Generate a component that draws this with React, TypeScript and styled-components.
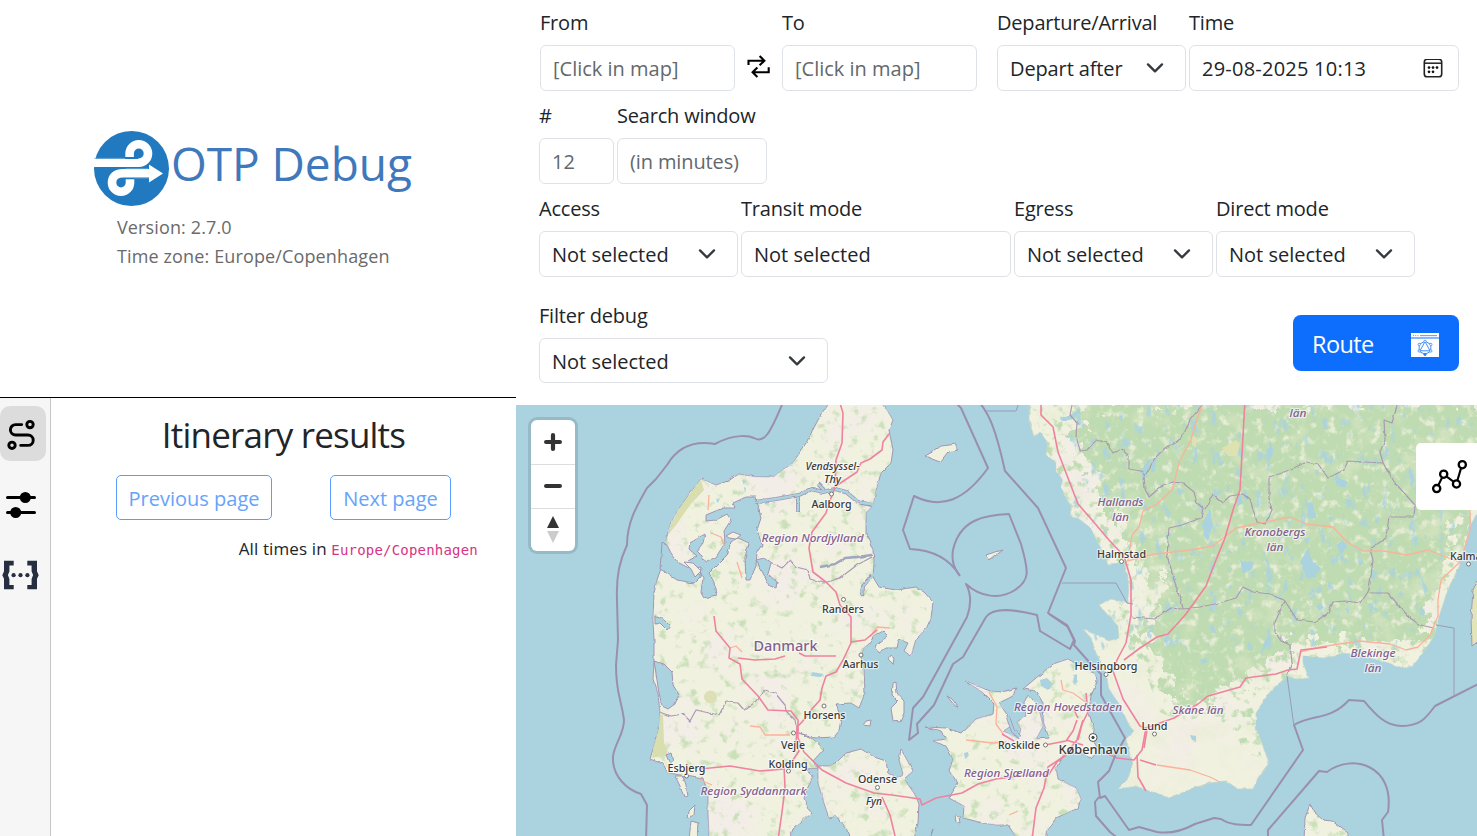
import React from 'react';
import styled, { createGlobalStyle } from 'styled-components';

const GlobalStyle = createGlobalStyle`
  * { box-sizing: border-box; }
  body {
    margin: 0;
    background: #fff;
    color: #212529;
    font-family: "Open Sans", "Noto Sans", sans-serif;
    font-size: 20px;
    line-height: 30px;
    letter-spacing: -0.2px;
  }
`;

const Page = styled.div`
  display: grid;
  grid-template-columns: 516px 1fr;
  width: 1477px;
  height: 836px;
  overflow: hidden;
`;

const Column = styled.div`
  display: flex;
  flex-direction: column;
  min-width: 0;
  height: 836px;
`;

const Brand = styled.header`
  height: 398px;
  flex: none;
  border-bottom: 1px solid #000;
  padding: 131px 0 0 94px;
`;

const BrandRow = styled.div`
  display: flex;
  align-items: flex-start;
  gap: 2px;
  height: 75px;
`;

const BrandTitle = styled.h1`
  margin: 0;
  padding-top: 3px;
  font-size: 46px;
  line-height: 58px;
  font-weight: 400;
  letter-spacing: -0.05px;
  color: #4078bc;
  white-space: nowrap;
`;

const BrandMeta = styled.div`
  padding: 7px 0 0 23px;
  font-size: 18px;
  line-height: 29px;
  letter-spacing: 0.13px;
  color: #6a6a6a;
`;

const Lower = styled.div`
  display: flex;
  flex: 1;
`;

const Sidebar = styled.nav`
  width: 51px;
  flex: none;
  border-right: 1px solid #c6c6c6;
  background: #f6f6f6;
  padding-top: 8px;
  display: flex;
  flex-direction: column;
  gap: 15px;
`;

const SideTab = styled.button<{ $active?: boolean }>`
  width: 46px;
  height: 55px;
  padding: 0;
  border: 0;
  border-radius: 10px;
  background: ${(p) => (p.$active ? '#dcdcdc' : 'transparent')};
  display: flex;
`;

const Results = styled.section`
  flex: 1;
  display: flex;
  flex-direction: column;
  align-items: center;
  padding-top: 14px;
`;

const ResultsTitle = styled.h2`
  margin: 0;
  font-size: 35px;
  line-height: 46px;
  font-weight: 400;
  letter-spacing: -0.8px;
`;

const Pager = styled.div`
  display: flex;
  gap: 58px;
  margin-top: 17px;
`;

const PageButton = styled.button<{ $width: number }>`
  width: ${(p) => p.$width}px;
  height: 45px;
  padding: 2px 0 0;
  border: 1px solid #5a9cfb;
  border-radius: 5px;
  background: #fff;
  color: #66a3fb;
  font: inherit;
  letter-spacing: 0;
  white-space: nowrap;
`;

const TimesNote = styled.div`
  align-self: flex-end;
  margin: 15px 38px 0 0;
  font-size: 17px;
  line-height: 28px;
  letter-spacing: 0.12px;
  white-space: nowrap;

  code {
    font-family: "DejaVu Sans Mono", monospace;
    font-size: 14px;
    letter-spacing: 0.2px;
    color: #d63384;
  }
`;

const SearchForm = styled.form`
  height: 405px;
  flex: none;
  padding: 8px 18px 0 23px;
`;

const FormRow = styled.div<{ $top?: number }>`
  display: flex;
  align-items: flex-start;
  gap: 3px;
  height: 83px;
  margin-top: ${(p) => p.$top ?? 10}px;
`;

const FieldBox = styled.label<{ $width: number; $left?: number }>`
  display: flex;
  flex-direction: column;
  gap: 7px;
  width: ${(p) => p.$width}px;
  margin-left: ${(p) => p.$left ?? 0}px;
  white-space: nowrap;
`;

const Control = styled.span<{ $muted?: boolean; $right: number; $height: number }>`
  display: flex;
  align-items: center;
  justify-content: space-between;
  height: ${(p) => p.$height}px;
  padding: ${(p) => 47 - p.$height}px ${(p) => p.$right}px 0 12px;
  border: 1px solid #dee2e6;
  border-radius: 6px;
  color: ${(p) => (p.$muted ? '#63686d' : '#212529')};
`;

const ControlText = styled.span<{ $spacing: number }>`
  letter-spacing: ${(p) => p.$spacing}px;
`;

const SwapButton = styled.button`
  align-self: flex-start;
  margin: 47px 9px 0 9px;
  padding: 0;
  width: 23px;
  height: 23px;
  border: 0;
  background: none;
  display: flex;
`;

const RouteButton = styled.button`
  width: 166px;
  height: 56px;
  margin: 14px 0 0 auto;
  padding: 3px 20px 0 19px;
  border: 0;
  border-radius: 8px;
  background: #0d6efd;
  color: #fff;
  font: inherit;
  font-size: 23.5px;
  letter-spacing: -0.6px;
  display: flex;
  align-items: center;
  justify-content: space-between;
`;

const RouteText = styled.span`
  padding-bottom: 2px;
`;

const MapArea = styled.main`
  position: relative;
  flex: 1;
  overflow: hidden;
  background: #aad3df;

  > svg { display: block; }
`;

const ZoomGroup = styled.div`
  position: absolute;
  left: 15px;
  top: 15px;
  width: 44px;
  border-radius: 6px;
  background: #fff;
  box-shadow: 0 0 0 3px rgba(0, 0, 0, 0.11);
`;

const ZoomButton = styled.button`
  display: flex;
  align-items: center;
  justify-content: center;
  width: 44px;
  height: 44px;
  padding: 0;
  border: 0;
  background: none;

  & + & {
    height: 43.5px;
    border-top: 1px solid #ddd;
  }
`;

const LayerToggle = styled.button`
  position: absolute;
  right: 0;
  top: 38px;
  width: 61px;
  height: 67px;
  padding: 0;
  border: 0;
  border-radius: 5px 0 0 5px;
  background: #fff;
  display: flex;
`;

const Chevron = () => (
  <svg width="18" height="12" viewBox="0 0.8 18 12" fill="none" stroke="#343a40" strokeWidth="2.3" strokeLinecap="round" strokeLinejoin="round">
    <path d="M2 2.2l7 7 7-7" />
  </svg>
);

const CalendarIcon = () => (
  <svg width="20" height="20" viewBox="0 0 20 20">
    <rect x="1.3" y="0.3" width="17.4" height="17.4" rx="2.8" fill="none" stroke="#222" strokeWidth="1.6" />
    <path d="M1 4.2h18" stroke="#222" strokeWidth="1.5" />
    <g fill="#111">
      {[[6, 8.6], [10, 8.6], [14, 8.6], [6, 12.8], [10, 12.8]].map(([x, y]) => (
        <circle key={`${x}-${y}`} cx={x} cy={y} r="1.35" />
      ))}
    </g>
  </svg>
);

type FieldProps = {
  label: string;
  value: string;
  width: number;
  left?: number;
  muted?: boolean;
  icon?: 'chevron' | 'calendar';
  right?: number;
  spacing?: number;
  height?: number;
};

const Field = ({ label, value, width, left, muted, icon, right = 21, spacing = 0, height = 46 }: FieldProps) => (
  <FieldBox $width={width} $left={left}>
    <span>{label}</span>
    <Control $muted={muted} $right={right} $height={height}>
      <ControlText $spacing={spacing}>{value}</ControlText>
      {icon === 'chevron' && <Chevron />}
      {icon === 'calendar' && <CalendarIcon />}
    </Control>
  </FieldBox>
);

const Logo = () => (
  <svg width="75" height="75" viewBox="0 0 75 75">
    <circle cx="37.5" cy="37.5" r="37.5" fill="#2179bf" />
    <g fill="none" stroke="#fff">
      <path strokeWidth="7.8" d="M0 32H45" />
      <path strokeWidth="8.6" d="M44 31.7h.8a9.2 9.2 0 1 0-9.2-9.2v3.6" />
      <path strokeWidth="8.6" d="M56 42.3H29C21 42.3 18 46.5 18 51.7a9 9 0 0 0 18 0v-3.5" />
    </g>
    <path d="M55 33.4l14 9-14 9.2z" fill="#fff" />
    <path d="M0 27.4h31M31.5 37.8H54M40.5 46.9H55" stroke="#8dbbe0" strokeWidth=".7" />
  </svg>
);

const ItineraryIcon = () => (
  <svg width="46" height="55" viewBox="0 406 46 55" fill="none" stroke="#000" strokeWidth="2.9" strokeLinecap="round">
    <circle cx="30" cy="424.6" r="3.2" />
    <circle cx="12" cy="445.3" r="3.2" />
    <path d="M21.7 424.6H15.6a5.2 5.2 0 0 0 0 10.4H28a5.2 5.2 0 0 1 0 10.4H20.7" />
  </svg>
);

const SlidersIcon = () => (
  <svg width="46" height="55" viewBox="0 476 46 55" stroke="#000" strokeWidth="3" strokeLinecap="round">
    <path d="M7.5 497.5h27M7.5 512.5h27" />
    <circle cx="25.3" cy="497.5" r="4" />
    <circle cx="15.7" cy="512.5" r="4" />
  </svg>
);

const BracesIcon = () => (
  <svg width="46" height="55" viewBox="0 546 46 55" fill="#262f3f">
    <path d="M13.7 560.8H4v10.4l-1.7 4 1.7 3.6v10.5h9.7V585H9.4v-6l-1.5-3.9 1.5-3.6v-6h4.3zM27.3 560.8H37v10.4l1.7 4-1.7 3.6v10.5h-9.7V585h4.3v-6l1.5-3.9-1.5-3.6v-6h-4.3z" />
    <circle cx="13.6" cy="575.2" r="2.1" />
    <circle cx="20.5" cy="575.2" r="2.1" />
    <circle cx="27.4" cy="575.2" r="2.1" />
  </svg>
);

const SwapIcon = () => (
  <svg width="23" height="23" viewBox="0 0 23 23" fill="none" stroke="#000" strokeWidth="2.1">
    <path d="M1.5 10V5.7h16M12.6 1l4.8 4.7-4.8 4.6M21.7 12.3v5h-16M10.4 12.5l-4.8 4.8 4.8 4.6" />
  </svg>
);

const GraphWindowIcon = () => (
  <svg width="28" height="24" viewBox="0 0 28 24" fill="none">
    <rect width="28" height="24" fill="#fff" />
    <path d="M0 5h28" stroke="#0d6efd" strokeWidth="1" />
    <path d="M2 2.6h6" stroke="#0d6efd" strokeWidth="1" strokeDasharray="1 1.2" opacity=".7" />
    <path d="M9 2.6h17" stroke="#0d6efd" strokeWidth="1.1" opacity=".65" />
    <g stroke="#2a7dfc" strokeWidth=".9">
      <path d="M14 8.2l-5.8 3.2v6.8l5.8 3.3 5.8-3.3v-6.8zM14 8.5l-5 9.3h10z" />
    </g>
    <g stroke="#2a7dfc" strokeWidth=".7" fill="#fff">
      <circle cx="14" cy="8.4" r="1.2" />
      <circle cx="8.2" cy="11.4" r="1.2" />
      <circle cx="19.8" cy="11.4" r="1.2" />
      <circle cx="8.2" cy="18" r="1.2" />
      <circle cx="19.8" cy="18" r="1.2" />
      <circle cx="14" cy="21.4" r="1.2" fill="#2a7dfc" />
    </g>
  </svg>
);

const NodesIcon = () => (
  <svg width="61" height="67" viewBox="1416 443 61 67" stroke="#000" strokeWidth="2.3" fill="#fff">
    <path d="M1436.7 488.5l7-14.2 12.7 9.5 5.7-19.2" strokeWidth="2.1" fill="none" />
    <circle cx="1436.7" cy="488.6" r="3.6" />
    <circle cx="1443.7" cy="474.2" r="3.6" />
    <circle cx="1456.5" cy="484" r="3.6" />
    <circle cx="1462.3" cy="464.7" r="3.6" />
  </svg>
);

/* Outlines of the land masses, in map canvas units. */
const JUTLAND =
  'M701 479L716 485 728 481 739 474 756 477 773 477 793 463 806 443 818 420 828 405V400H882L884 405 893 420 889 430 893 450 891 463 881 473 876 490 873 505 866 513 866 533 873 550 874 563 873 577 879 587 896 590 916 587 924 592 933 602 931 618 926 629 916 639 911 656 904 651 908 643 898 639 896 648 886 648 879 653 875 646 888 636 883 631 874 636 869 644 863 649 861 658 864 668 865 693 859 708 851 703 836 704 841 719 839 731 834 737 816 738 799 733 813 739 824 749 813 761 818 768 806 769 813 776 808 786 804 799 811 813 793 829 789 840H709L709 833 708 813 708 793 703 779 686 776 675 774 668 773 663 764 650 759 654 746 659 729 660 713 658 693 653 679 654 663 654 640 653 620 654 592 657 580 664 560 666 541 670 525 678 510 690 493Z';
const FUNEN =
  'M818 766L829 766 836 763 846 753 861 749 874 757 886 761 888 773 896 778 903 774 899 760 901 749 907 760 913 771 904 779 914 793 919 803 918 823 914 840H850L849 833 836 816 829 818 824 803 818 783Z';
const ZEALAND =
  'M925 727L946 728 961 733 976 719 993 714 994 703 985 694 966 681 989 691 1003 692 1016 688 1013 696 999 703 1006 713 1011 726 1003 731 1019 739 1021 729 1017 722 1026 716 1024 703 1028 694 1038 706 1043 726 1036 739 1049 738 1044 723 1043 703 1036 691 1023 689 1036 678 1053 664 1068 659 1083 668 1096 674 1097 682 1091 696 1089 713 1094 729 1093 739 1098 750 1091 758 1080 752 1063 756 1056 768 1058 779 1076 788 1081 799 1078 808 1056 818 1046 833 1046 840H1018L1008 825 997 825 983 823 963 818 964 806 949 798 958 783 949 771 953 759 946 746 933 741 946 739 941 731Z';
const SWEDEN =
  'M1029 400L1029 420 1034 437 1040 432 1048 443 1046 455 1056 462 1056 470 1063 480 1061 487 1071 507 1072 517 1078 518 1091 528 1098 543 1104 553 1108 564 1124 563 1128 577 1129 590 1128 603 1111 599 1099 605 1106 613 1111 618 1118 626 1119 638 1109 641 1083 629 1091 638 1096 653 1106 673 1109 689 1119 703 1128 723 1134 731 1126 739 1129 751 1133 763 1128 779 1118 789 1136 786 1149 791 1156 793 1169 798 1194 788 1209 783 1226 781 1238 789 1253 789 1259 776 1269 763 1263 746 1256 729 1256 713 1266 696 1279 683 1289 676 1296 679 1309 678 1303 663 1303 656 1323 658 1343 653 1365 656 1389 663 1403 668 1413 666 1423 653 1434 636 1439 616 1449 587 1459 567 1466 543 1470 525 1480 510V400Z';
const FOREST =
  'M1072 400L1078 430 1086 460 1100 485 1114 515 1130 540 1142 562 1162 590 1158 612 1132 628 1138 640 1158 652 1165 685 1182 703 1212 700 1240 680 1262 660 1290 645 1320 642 1415 638 1427 618 1438 585 1454 545 1480 490V400Z';
const BORNHOLM = 'M1310 804L1315 813 1323 820 1332 821 1348 833 1348 840H1304L1305 818Z';
const OLAND = 'M1480 575L1473 590 1471 618 1472 646 1480 640Z';

const ISLANDS = [
  'M925 456L934 451 941 446 957 444 957 450 948 452 940 462 932 459Z',
  'M893 684L896 683 897 693 904 701 904 713 900 722 893 721 891 708 898 701 892 695Z',
  'M890 655L894 658 893 664 888 659Z',
  'M947 696L952 699 958 707 955 706Z',
  'M675 776L683 776 686 785 688 796 684 797 680 786Z',
  'M689 811L695 805 694 815 688 818Z',
  'M691 821L698 823 697 840H689Z',
  'M866 721L871 720 870 726 863 725Z',
  'M930 836L933 829 930 840Z',
  'M986 555L992 553 1003 550 995 556 990 560Z',
  'M955 815L959 816 960 824 956 822Z',
];

const FJORDS = [
  'M662 543L667 545 671 553 679 563 693 570 703 577 701 593 704 598 716 595 714 582 709 573 719 563 727 555 731 543 738 538 749 543 745 557 746 580 750 580 756 566 757 552 762 545 757 530 761 518 756 497 746 497 733 503 735 508 723 508 706 515 706 521 716 520 727 514 731 520 724 531 725 543 716 557 706 562 702 556 697 551 703 543 705 534 690 543 689 549 697 556 688 561 694 568 701 567 700 577 694 583 677 580 665 572 660 569Z',
  'M756 560L764 558 771 563 768 574 777 582 776 588 769 586 764 575Z',
  'M654 661L664 664 672 672 673 685 679 695 675 704 668 709 662 706 659 693Z',
  'M655 616L664 620 670 626 667 630 660 623 655 624Z',
  'M666 755L671 753 674 761 670 764Z',
];

const LAKES = [
  'M1040 680l7-2 6 6-5 6-7-4z', 'M1073 675l4-1v9l-3 3z', 'M964 753l4-1 1 5-4 2z',
  'M1203 520l7-10 3 15-5 15-5-5z', 'M1141 470l8-12 2 3-7 18z', 'M1153 458l4 0-3 15-3-2z',
  'M1300 562l8-14 5 14 8 6-5 9-9 2z', 'M1306 502l7 2 3 14-7 0z', 'M1343 540l5 8-7 5-6-7z',
  'M1266 450l5-7 2 10-4 9z', 'M1240 560l5 2 9 0-3 8-8 3z', 'M1336 473l5 6 7 3-3 6-9-3z',
  'M1316 606l5-3 3 5-4 4z', 'M1265 640l5-6-3 12-6 8z', 'M1200 660l6-2 2 4-6 2z', 'M1190 735l6 1 0 5-4-1z',
  'M1060 418l14-5 5-7 2 8-12 6-7 2z', 'M1270 700l6 3 0 5z', 'M1245 488l3 12-5-1z', 'M1237 490l6 12-6 5z',
  'M716 500l4-2-2 5zM742 480l3 1-1 4zM744 487l2 1-1 6z', 'M812 672l12 2-3 3-10-1z',
];

const TERRITORIAL_LINES = [
  'M646 840L647 805 641 794C628 790 612 777 613 757C614 744 624 735 624 720C621 697 616 695 616 665L618 640 617 600C616 575 620 560 627 545C627 523 636 507 647 488L656 479 667 465C677 448 692 440 715 444C735 433 750 436 754 438C764 444 770 434 784 400',
  'M957 404L961 408 988 468C965 500 942 510 914 496L903 530 910 549C932 550 950 559 960 576',
  'M977 400C989 412 996 430 1005 471L1038 508 1066 568 1048 613 1067 625 1074 640 1070 649 1040 631 1037 615C1010 608 992 609 986 617L963 657 953 664 934 705 917 724 918 733 909 740 913 708 923 697 967 617C971 606 972 595 966 584C980 597 1000 600 1015 590C1030 580 1029 572 1021 544L1009 514C985 515 960 519 953 550C951 562 955 569 959 575',
  'M1049 614L1068 627 1075 641 1074 645 1090 663 1101 674 1101 695 1125 738 1115 756 1109 771 1098 782 1100 798 1105 796 1129 830 1139 827 1157 832C1170 834 1184 830 1195 824L1214 818 1221 819C1230 825 1240 825 1251 825L1303 750 1294 725C1312 714 1330 721 1349 700L1364 701C1375 714 1385 726 1402 726C1422 726 1427 716 1435 706L1480 683',
  'M1268 840V830L1319 771 1327 772C1352 753 1395 765 1388 812L1382 820 1384 840',
  'M1099 797L1095 802 1096 816 1110 832 1120 840',
];

const THIN_LINES = [
  'M984 411H1016L1020 400',
  'M1062 583H1116L1127 603 1133 604',
  'M1287 676L1294 726',
  'M1436 625L1454 628V696',
];

const ADMIN_BORDERS = [
  'M1072 405L1070 415 1077 423 1076 436 1080 451 1087 450 1096 440 1107 443 1113 453 1121 449 1129 456 1129 469 1141 471 1145 476 1155 458 1165 448 1182 438 1190 420 1202 405',
  'M1144 476L1145 489 1149 497 1163 485 1173 482 1183 483 1194 492 1197 503 1203 508 1201 518 1182 525 1169 528 1167 556 1174 580 1181 600 1183 609 1200 607 1215 604 1236 598 1243 587 1253 592 1270 594 1285 601 1297 620 1315 622 1328 613 1333 602 1345 601 1361 603 1369 590 1373 560 1370 549 1386 538 1389 517 1414 517 1415 505 1395 483 1383 463 1348 461 1344 470 1328 478 1318 464 1307 462 1282 473 1269 477 1269 498 1272 510 1265 524 1257 522 1250 500 1243 494 1230 496 1222 503 1213 495 1205 510',
  'M1383 463L1380 452 1385 440 1384 420 1392 423 1397 405',
  'M1132 617L1155 619 1171 608 1182 609M1285 601L1275 622 1275 632 1281 641 1290 645 1292 662 1287 676',
  'M1369 593L1388 593 1400 607 1410 618 1420 625 1434 628',
  'M660 712L670 716 683 714 690 721 696 710 709 713 719 715 726 702 738 703 744 710 757 701 765 690 775 693 785 705 786 711 795 720 798 735',
  'M770 562L782 568 790 560 796 567 808 570 810 579 824 583 840 578 857 565 872 557',
];

const MOTORWAYS = [
  'M839 400L843 413 842 443 836 460 835 487 828 506 826 513 812 532 809 548 813 572 826 582 836 592 840 605 851 617 851 643 843 660 836 672 826 676 822 688 820 700 812 709 802 722 797 727 796 745 799 751 791 763 784 765 785 788 782 812 778 840',
  'M889 434L883 442 882 450 870 459 861 463 857 472 845 480 836 486',
  'M851 642L865 640 877 630', 'M836 656H805L799 653M785 656L775 659 755 660 738 658',
  'M714 616L716 631 730 648 729 658 740 664 742 679 758 696 768 710 791 711 798 720 798 738 804 752 822 770 846 783 874 793 892 795 920 799 922 805 936 798 962 793 978 784 996 779 1027 775 1049 774 1057 762 1065 755 1077 740 1083 720',
  'M700 769L730 766 760 771 784 769', 'M882 797L890 815 896 840',
  'M1066 755L1048 767 1044 788 1036 808 1032 840', 'M1045 745L1066 741 1073 731 1077 720M1078 740L1082 724 1088 712 1086 693M1078 718L1074 710M1066 740L1083 745',
  'M1041 400L1041 415 1053 427 1058 452 1068 478 1078 504 1092 520 1109 540 1124 556 1131 580 1131 615 1126 643 1117 660 1113 671 1123 699 1140 726 1146 728 1142 750 1134 760 1117 758 1104 752',
  'M1124 660L1140 648 1157 637 1168 634 1186 614 1206 586 1216 560 1225 538 1233 510 1240 490 1245 400',
  'M1146 728L1174 718 1198 704 1208 696 1240 687 1246 678 1276 674 1288 670 1297 669 1301 650 1327 647',
  'M1140 760L1156 765M1137 755L1138 777 1146 791M1147 730L1144 748M1002 734L1014 741',
];

const TRUNK_ROADS = [
  'M1128 560L1132 535 1139 527 1143 511 1157 504 1172 490 1180 460 1191 440 1195 425 1204 400',
  'M1127 561L1155 554 1190 550 1213 546 1236 528 1290 517 1306 524 1333 527 1347 542 1363 551 1384 551 1407 555 1428 550 1459 562',
  'M1462 560L1441 580 1438 600 1438 616 1430 635 1418 647 1406 650 1390 644 1359 641 1320 647 1300 652',
  'M1157 765L1190 770 1210 777 1218 781', 'M966 740L993 743 1006 742', 'M989 692L997 707 996 724 1004 735',
  'M1061 680L1063 690 1073 693 1087 703M1470 510L1470 530 1462 557',
  'M700 780L712 785M750 726L760 727 765 735 790 735M711 533L721 537 724 545M737 562L742 578M709 495L708 510M870 637L877 627 890 628',
  'M730 648L736 646 742 652M1009 815L1018 811',
];

type MapLabel = { x: number; y: number; text: string; w: number; kind?: 'region' | 'italic' | 'country'; size?: number };

const LABELS: MapLabel[] = [
  { x: 832.5, y: 470, text: 'Vendsyssel-', w: 54, kind: 'italic', size: 11 },
  { x: 832.5, y: 483, text: 'Thy', w: 17, kind: 'italic', size: 11 },
  { x: 831.5, y: 507.5, text: 'Aalborg', w: 40 },
  { x: 812.5, y: 542, text: 'Region Nordjylland', w: 102, kind: 'region' },
  { x: 843, y: 612.5, text: 'Randers', w: 42 },
  { x: 785.5, y: 651, text: 'Danmark', w: 64, kind: 'country', size: 13.5 },
  { x: 860.5, y: 667.5, text: 'Aarhus', w: 36 },
  { x: 824.5, y: 718.5, text: 'Horsens', w: 42 },
  { x: 793, y: 748.5, text: 'Vejle', w: 24 },
  { x: 788, y: 767.5, text: 'Kolding', w: 39 },
  { x: 686.5, y: 771.5, text: 'Esbjerg', w: 38 },
  { x: 753.5, y: 794.5, text: 'Region Syddanmark', w: 106, kind: 'region' },
  { x: 877.5, y: 783, text: 'Odense', w: 39 },
  { x: 874, y: 804.5, text: 'Fyn', w: 16, kind: 'italic' },
  { x: 1006.5, y: 777, text: 'Region Sjælland', w: 85, kind: 'region' },
  { x: 1068, y: 710.5, text: 'Region Hovedstaden', w: 108, kind: 'region' },
  { x: 1019, y: 749, text: 'Roskilde', w: 42 },
  { x: 1093, y: 754, text: 'København', w: 69, size: 12.5 },
  { x: 1106, y: 670, text: 'Helsingborg', w: 63 },
  { x: 1154.5, y: 730, text: 'Lund', w: 26 },
  { x: 1198, y: 713.5, text: 'Skåne län', w: 51, kind: 'region' },
  { x: 1120.5, y: 506, text: 'Hallands', w: 46, kind: 'region' },
  { x: 1120.5, y: 520.5, text: 'län', w: 17, kind: 'region' },
  { x: 1121.5, y: 557.5, text: 'Halmstad', w: 49 },
  { x: 1275, y: 536, text: 'Kronobergs', w: 61, kind: 'region' },
  { x: 1275, y: 550.5, text: 'län', w: 17, kind: 'region' },
  { x: 1298, y: 416.5, text: 'län', w: 17, kind: 'region' },
  { x: 1373, y: 656.5, text: 'Blekinge', w: 45, kind: 'region' },
  { x: 1373, y: 671.5, text: 'län', w: 17, kind: 'region' },
  { x: 1468, y: 559.5, text: 'Kalmar', w: 36 },
];

const TOWNS = [
  [831.5, 494], [843.5, 599.5], [861, 655], [824, 706], [793.5, 733], [788.5, 771], [686.5, 776],
  [877.5, 787.5], [1045.5, 745], [1106, 674.5], [1154.5, 734], [1121.5, 561.5], [1468.5, 564],
];

const MapText = styled.text<{ $kind?: string }>`
  font-family: "Noto Sans", "Open Sans", sans-serif;
  font-style: ${(p) => (p.$kind === 'region' || p.$kind === 'italic' ? 'italic' : 'normal')};
  font-weight: 500;
  letter-spacing: 0;
  text-anchor: middle;
  fill: ${(p) => (p.$kind === 'region' || p.$kind === 'country' ? '#83608f' : '#3a3a3a')};
  stroke: rgba(255, 255, 255, 0.6);
  stroke-width: 2.4px;
  stroke-linejoin: round;
  paint-order: stroke;
`;

const Lines = ({ paths }: { paths: string[] }) => <>{paths.map((d) => <path key={d} d={d} />)}</>;

const LandCover = ({ id, seed, freq, color, slope, cut, max = 1 }: { id: string; seed: number; freq: string; color: string; slope: number; cut: number; max?: number }) => (
  <filter id={id} x="0" y="0" width="100%" height="100%" colorInterpolationFilters="sRGB">
    <feTurbulence type="fractalNoise" baseFrequency={freq} numOctaves={4} seed={seed} />
    <feColorMatrix values={`0 0 0 0 0  0 0 0 0 0  0 0 0 0 0  ${slope} 0 0 0 ${-slope * cut}`} result="mask" />
    <feFlood floodColor={color} floodOpacity={max} />
    <feComposite in2="mask" operator="in" />
  </filter>
);

const WorldMap = () => (
  <svg width="961" height="431" viewBox="516 405 961 431">
    <defs>
      <clipPath id="danish-land">
        <path d={JUTLAND} /><path d={FUNEN} /><path d={ZEALAND} /><path d={BORNHOLM} />
      </clipPath>
      <clipPath id="swedish-land"><path d={SWEDEN} /></clipPath>
      <clipPath id="wooded">
        <path d="M1020 400H1480V690H1270L1250 700 1262 735 1266 760 1245 752 1232 728 1205 716 1180 722 1160 712 1148 680 1130 650 1090 600z" />
      </clipPath>
      <LandCover id="meadow" seed={7} freq="0.1" color="#bfdcae" slope={5} cut={0.58} max={0.8} />
      <LandCover id="suburb" seed={22} freq="0.02" color="#f3ece8" slope={4} cut={0.5} max={0.8} />
      <LandCover id="clearing" seed={4} freq="0.11" color="#eef0dc" slope={4} cut={0.54} max={0.85} />
      <LandCover id="glade" seed={15} freq="0.035" color="#e3ebcd" slope={4} cut={0.54} max={0.45} />
      <LandCover id="ponds" seed={31} freq="0.11 0.06" color="#aad3df" slope={8} cut={0.62} max={0.85} />
      <LandCover id="woods" seed={12} freq="0.11" color="#bfdbb1" slope={6} cut={0.54} />
      <filter id="rough" x="-5%" y="-5%" width="110%" height="110%">
        <feTurbulence type="fractalNoise" baseFrequency="0.07" numOctaves={5} seed={3} />
        <feDisplacementMap in="SourceGraphic" scale={56} xChannelSelector="R" yChannelSelector="G" />
      </filter>
      <filter id="coast" x="-2%" y="-2%" width="104%" height="104%">
        <feTurbulence type="fractalNoise" baseFrequency="0.15" numOctaves={2} seed={9} />
        <feDisplacementMap in="SourceGraphic" scale={3} xChannelSelector="R" yChannelSelector="G" />
      </filter>
    </defs>

    <g filter="url(#coast)">
      <g fill="#f1f1e0" stroke="#a195b4" strokeWidth="1" strokeLinejoin="round">
        <path d={JUTLAND} /><path d={FUNEN} /><path d={ZEALAND} /><path d={BORNHOLM} />
        <Lines paths={ISLANDS} />
        <path d={OLAND} fill="#e2e5b8" />
        <path d={SWEDEN} stroke="#c5d6c8" strokeWidth=".8" />
      </g>
    </g>
    <g clipPath="url(#danish-land)">
      <rect x="640" y="400" width="720" height="440" filter="url(#suburb)" />
      <rect x="640" y="400" width="720" height="440" filter="url(#meadow)" />
      <path d="M701 480L690 493 678 510 668 535 676 525 690 505 704 490zM658 715L663 715 664 742 668 755 652 758z" fill="#d9deae" />
      <circle cx="710.5" cy="697" r="6.5" fill="#dce0b4" />
    </g>
    <g clipPath="url(#swedish-land)">
      <rect x="1020" y="400" width="460" height="440" filter="url(#suburb)" />
      <g clipPath="url(#wooded)">
        <rect x="1020" y="400" width="460" height="380" filter="url(#woods)" />
      </g>
      <path d={FOREST} fill="#bfdbb1" filter="url(#rough)" />
      <rect x="1020" y="400" width="460" height="440" filter="url(#glade)" />
      <rect x="1020" y="400" width="460" height="440" filter="url(#clearing)" />
      <rect x="1070" y="400" width="410" height="250" filter="url(#ponds)" />
      <path d="M1222 448l14-8 4 4-3 12-9 0zM1192 435l5 3-1 10-4-3z" fill="#dde2b0" />
    </g>
    <g fill="#aad3df" filter="url(#coast)">
      <g stroke="#a195b4" strokeWidth="1"><Lines paths={FJORDS} /></g>
      <Lines paths={LAKES} />
    </g>
    <g fill="none" strokeLinejoin="round">
      <g filter="url(#coast)">
        <g stroke="#a195b4" strokeWidth="4"><path d="M755 502L776 499 799 495 812 489 823 492 835 489 846 492 858 502 872 505M798 497V512M818 484l6 6M872 575L863 586 862 596M1008 717l5 14 7 6" /></g>
        <g stroke="#aad3df" strokeWidth="2.4"><path d="M755 502L776 499 799 495 812 489 823 492 835 489 846 492 858 502 875 505M798 497V511M818 484l6 6M875 573L863 586 862 595M1008 717l5 14 7 6" /></g>
        <path d="M820 567L835 564 845 558 857 557 872 555" stroke="#a0a5c0" strokeWidth="2.4" />
      </g>
      <path d="M726 536l7-4 8 3-5 4-7-1z" fill="#f1f1e0" stroke="#a195b4" />
      <path d="M684 562l9 1 8 8-6 6-4-8z" fill="#f1f1e0" stroke="#a195b4" />
      <g stroke="#aa9ab2" strokeWidth="1.2" filter="url(#coast)"><Lines paths={ADMIN_BORDERS} /></g>
      <g stroke="#fbb29a" strokeWidth="1.3"><Lines paths={TRUNK_ROADS} /></g>
      <g stroke="#ef839d" strokeWidth="1.6"><Lines paths={MOTORWAYS} /></g>
      <g stroke="#9b8fb1" strokeWidth="2"><Lines paths={TERRITORIAL_LINES} /></g>
      <g stroke="#9b9ab8" strokeWidth="1"><Lines paths={THIN_LINES} /></g>
    </g>
    <g fill="#fff" stroke="#777" strokeWidth="1">
      {TOWNS.map(([x, y]) => <circle key={`${x}-${y}`} cx={x} cy={y} r="2" />)}
      <circle cx="1093" cy="737.5" r="4" stroke="#555" />
      <circle cx="1093" cy="737.5" r="1.2" fill="#444" stroke="#444" />
    </g>
    {LABELS.map((l) => (
      <MapText key={`${l.text}-${l.x}-${l.y}`} x={l.x} y={l.y} $kind={l.kind} fontSize={l.size ?? 11.3} textLength={l.w} lengthAdjust="spacingAndGlyphs">
        {l.text}
      </MapText>
    ))}
  </svg>
);

export default function App() {
  return (
    <Page>
      <GlobalStyle />
      <Column>
        <Brand>
          <BrandRow>
            <Logo />
            <BrandTitle>OTP Debug</BrandTitle>
          </BrandRow>
          <BrandMeta>
            <div>Version: 2.7.0</div>
            <div>Time zone: Europe/Copenhagen</div>
          </BrandMeta>
        </Brand>
        <Lower>
          <Sidebar>
            <SideTab $active aria-label="Itinerary"><ItineraryIcon /></SideTab>
            <SideTab aria-label="Filters"><SlidersIcon /></SideTab>
            <SideTab aria-label="Arguments"><BracesIcon /></SideTab>
          </Sidebar>
          <Results>
            <ResultsTitle>Itinerary results</ResultsTitle>
            <Pager>
              <PageButton $width={156}>Previous page</PageButton>
              <PageButton $width={121}>Next page</PageButton>
            </Pager>
            <TimesNote>All times in <code>Europe/Copenhagen</code></TimesNote>
          </Results>
        </Lower>
      </Column>
      <Column>
        <SearchForm>
          <FormRow $top={0}>
            <Field label="From" value="[Click in map]" width={195} left={1} muted />
            <SwapButton type="button" aria-label="Swap"><SwapIcon /></SwapButton>
            <Field label="To" value="[Click in map]" width={195} muted />
            <Field label="Departure/Arrival" value="Depart after" width={189} left={17} icon="chevron" spacing={-0.12} />
            <Field label="Time" value="29-08-2025 10:13" width={270} icon="calendar" right={15} spacing={0.23} />
          </FormRow>
          <FormRow>
            <Field label="#" value="12" width={75} muted />
            <Field label="Search window" value="(in minutes)" width={150} muted spacing={-0.12} />
          </FormRow>
          <FormRow>
            <Field label="Access" value="Not selected" width={199} icon="chevron" />
            <Field label="Transit mode" value="Not selected" width={270} />
            <Field label="Egress" value="Not selected" width={199} icon="chevron" />
            <Field label="Direct mode" value="Not selected" width={199} icon="chevron" />
          </FormRow>
          <FormRow $top={24}>
            <Field label="Filter debug" value="Not selected" width={289} icon="chevron" height={45} />
            <RouteButton type="button">
              <RouteText>Route</RouteText>
              <GraphWindowIcon />
            </RouteButton>
          </FormRow>
        </SearchForm>
        <MapArea>
          <WorldMap />
          <ZoomGroup>
            <ZoomButton aria-label="Zoom in">
              <svg width="18" height="18" viewBox="0 0 18 18" stroke="#333" strokeWidth="4.2" strokeLinecap="round"><path d="M2.1 9h13.8M9 2.1v13.8" /></svg>
            </ZoomButton>
            <ZoomButton aria-label="Zoom out">
              <svg width="18" height="6" viewBox="0 0 18 6" stroke="#333" strokeWidth="4.2" strokeLinecap="round"><path d="M2.1 3h13.8" /></svg>
            </ZoomButton>
            <ZoomButton aria-label="Reset bearing">
              <svg width="12" height="27" viewBox="0 0 12 27"><path d="M6 0l6 12H0z" fill="#333" /><path d="M6 27l6-12H0z" fill="#ccc" /></svg>
            </ZoomButton>
          </ZoomGroup>
          <LayerToggle aria-label="Layers"><NodesIcon /></LayerToggle>
        </MapArea>
      </Column>
    </Page>
  );
}
